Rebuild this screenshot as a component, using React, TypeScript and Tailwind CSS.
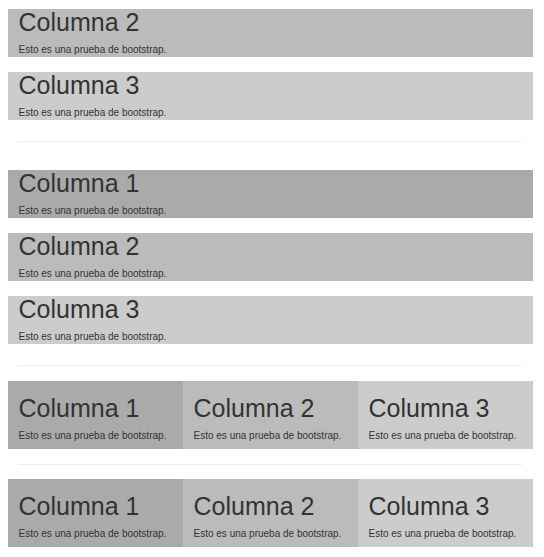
import React from "react";

const colors = ["bg-[#aaaaaa]", "bg-[#bbbbbb]", "bg-[#cccccc]"];

function FullBlock({ n, color }: { n: number; color: string }) {
  return (
    <div className={`${color} px-[10.5px]`}>
      <h1 className="text-[25px] leading-[27px] mb-[7px] font-normal">Columna {n}</h1>
      <p className="text-[10px] leading-[14.3px]">Esto es una prueba de bootstrap.</p>
    </div>
  );
}

function ThreeRow() {
  return (
    <div className="flex">
      {[1, 2, 3].map((n, i) => (
        <div key={n} className={`${colors[i]} flex-1 px-[10.5px] pt-[14px] pb-[6px]`}>
          <h1 className="text-[25px] leading-[27px] mb-[7px] font-normal">Columna {n}</h1>
          <p className="text-[10px] leading-[14.3px]">Esto es una prueba de bootstrap.</p>
        </div>
      ))}
    </div>
  );
}

function Hr({ className }: { className: string }) {
  return <div className={`h-px bg-[#eeeeee] ml-[10px] mr-[11px] ${className}`} />;
}

export default function App() {
  return (
    <div className="w-[544px] h-[557px] overflow-hidden bg-white text-[#333333] font-['Liberation_Sans',Arial,sans-serif]">
      <div className="ml-[8px] w-[525px] pt-[9px]">
        <div className="flex flex-col gap-[14.5px]">
          <FullBlock n={2} color={colors[1]} />
          <FullBlock n={3} color={colors[2]} />
        </div>
        <Hr className="mt-[21px]" />
        <div className="flex flex-col gap-[14.5px] mt-[28px]">
          <FullBlock n={1} color={colors[0]} />
          <FullBlock n={2} color={colors[1]} />
          <FullBlock n={3} color={colors[2]} />
        </div>
        <Hr className="mt-[21.5px]" />
        <div className="mt-[14.6px]">
          <ThreeRow />
        </div>
        <Hr className="mt-[14.7px]" />
        <div className="mt-[14px]">
          <ThreeRow />
        </div>
      </div>
    </div>
  );
}
